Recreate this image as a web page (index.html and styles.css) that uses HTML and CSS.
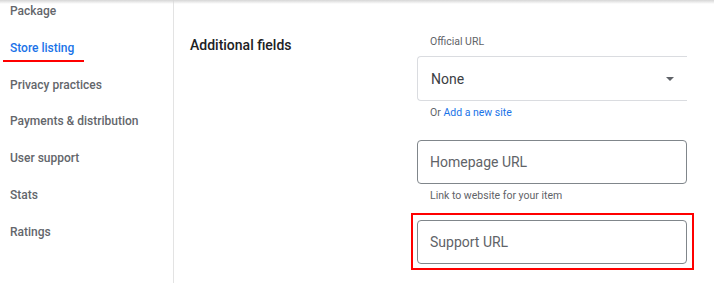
FILE: index.html
```html
<!DOCTYPE html>
<html lang="en">
  <head>
    <meta charset="UTF-8" />
    <meta name="viewport" content="width=device-width, initial-scale=1.0" />
    <title>Store listing</title>
    <link rel="stylesheet" href="styles.css">
  </head>
  <body>
    <div class="top-shadow"></div>
    <div class="layout">
      <nav class="sidebar">
        <a class="nav-item">Package</a>
        <a class="nav-item active">Store listing</a>
        <a class="nav-item">Privacy practices</a>
        <a class="nav-item">Payments &amp; distribution</a>
        <a class="nav-item">User support</a>
        <a class="nav-item">Stats</a>
        <a class="nav-item">Ratings</a>
      </nav>
      <main class="content">
        <section class="form-section">
          <h2 class="section-title">Additional fields</h2>
          <div class="fields">
            <div class="field-label">Official URL</div>
            <div class="select-box">
              <span>None</span>
              <span class="arrow"></span>
            </div>
            <div class="hint">Or <a class="link">Add a new site</a></div>

            <div class="text-input homepage">Homepage URL</div>
            <div class="hint">Link to website for your item</div>

            <div class="highlight">
              <div class="text-input">Support URL</div>
            </div>
          </div>
        </section>
      </main>
    </div>
  </body>
</html>
```

FILE: styles.css
```css
body {
  margin: 0;
  font-family: Roboto, "Liberation Sans", sans-serif;
  background: #fff;
  overflow: hidden;
}
.top-shadow {
  position: absolute;
  top: 0;
  left: 0;
  right: 0;
  height: 4px;
  background: linear-gradient(#d6d6d6, rgba(255, 255, 255, 0));
}
.layout {
  display: flex;
  height: 283px;
}
.sidebar {
  width: 173px;
  border-right: 1px solid #e3e3e3;
  display: flex;
  flex-direction: column;
  margin-top: -7px;
}
.nav-item {
  position: relative;
  display: block;
  height: 36.8px;
  line-height: 36px;
  padding-left: 10px;
  font-size: 12px;
  font-weight: 500;
  color: #63666b;
}
.nav-item.active {
  color: #1a73e8;
}
.nav-item.active::after {
  content: "";
  position: absolute;
  left: 3px;
  width: 81px;
  top: 30px;
  height: 2px;
  background: #f00;
}
.content {
  flex: 1;
  padding-left: 16px;
}
.form-section {
  display: flex;
  padding-top: 34px;
}
.section-title {
  width: 227px;
  margin: 0;
  font-size: 14px;
  font-weight: 500;
  line-height: 22px;
  color: #202124;
}
.fields {
  width: 270px;
}
.field-label {
  font-size: 10.5px;
  line-height: 16px;
  padding-left: 13px;
  color: #5f6368;
}
.select-box {
  margin-top: 6px;
  height: 43px;
  border: 1px solid #dadce0;
  border-right: none;
  border-radius: 4px 0 0 4px;
  display: flex;
  align-items: center;
  justify-content: space-between;
  padding: 0 13px 0 13px;
  font-size: 14px;
  color: #3c4043;
}
.arrow {
  width: 0;
  height: 0;
  border-left: 4.5px solid transparent;
  border-right: 4.5px solid transparent;
  border-top: 4.5px solid #5f6368;
}
.hint {
  margin-top: 4px;
  padding-left: 13px;
  font-size: 10.5px;
  line-height: 16px;
  color: #5f6368;
}
.link {
  color: #1a73e8;
}
.text-input {
  height: 42px;
  line-height: 42px;
  border: 1px solid #80868b;
  border-radius: 4px;
  padding-left: 12px;
  font-size: 14px;
  color: #5f6368;
}
.homepage {
  margin-top: 19px;
}
.highlight {
  margin: 9px -7px 0 -6px;
  border: 2px solid #f00;
  padding: 5px 5px 4px 4px;
}
```
